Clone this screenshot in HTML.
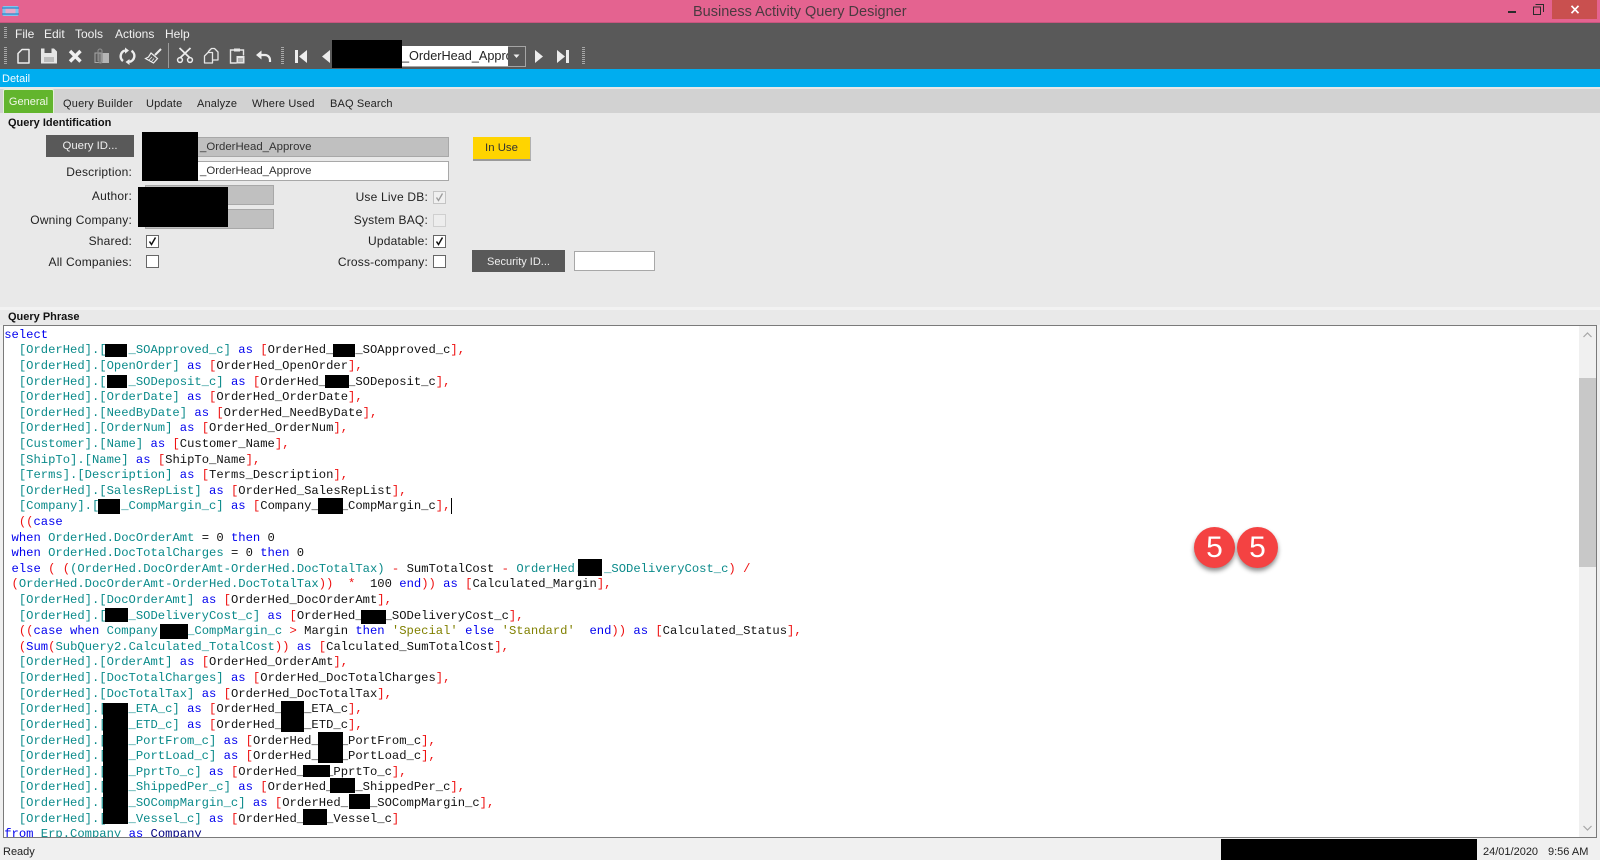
<!DOCTYPE html>
<html><head><meta charset="utf-8"><title>Business Activity Query Designer</title>
<style>
html,body{margin:0;padding:0;width:1600px;height:860px;overflow:hidden;background:#f0f0f0}
body{position:relative;font-family:"Liberation Sans",Arial,sans-serif;font-size:12px;color:#222}
.a{position:absolute}
.txt{position:absolute;white-space:nowrap;line-height:14px}
.lab{position:absolute;white-space:nowrap;line-height:14px;text-align:right;width:130px;letter-spacing:.2px}
.blk{position:absolute;background:#000}
.fld{position:absolute;box-sizing:border-box;border:1px solid #a8a8a8;background:#c0c0c0;font-size:11.4px}
.btn{position:absolute;background:#595959;color:#eee;text-align:center;font-size:11.4px}
.cb{position:absolute;box-sizing:border-box;width:13px;height:13px;background:#fff;border:1px solid #666}
.cb svg{position:absolute;left:0;top:0}
.grip{position:absolute;width:3px;background:repeating-linear-gradient(to bottom,#a8a8a8 0 1px,transparent 1px 2px)}
#ed{position:absolute;left:3px;top:325px;width:1594px;height:513px;box-sizing:border-box;border:1px solid #7a7a7a;background:#fff;overflow:hidden}
#code{position:absolute;left:.2px;top:1.7px;margin:0;font-family:"Liberation Mono",monospace;font-size:12.2px;line-height:15.61px;color:#111;white-space:pre}
.t{color:#0a8a8a}.b{color:#0000ee}.r{color:#ee1111}.n{color:#000080}.o{color:#808000}
.badge{position:absolute;width:41px;height:41px;border-radius:50%;background:#f44242;box-shadow:0 3px 5px rgba(0,0,0,.45);color:#fff;font-size:30px;line-height:41px;text-align:center}
</style></head><body>

<!-- title bar -->
<div class="a" style="left:0;top:0;width:1600px;height:23px;background:#e46390;border-bottom:1px solid #c9557f;box-sizing:border-box"></div>
<svg class="a" style="left:2px;top:5px" width="17" height="12" viewBox="0 0 17 12"><rect x="0.5" y="1" width="16" height="10" rx="1.5" fill="#7fc4ee"/><rect x="3.5" y="3.5" width="10" height="5" fill="#e8a8c8"/><path d="M0 3h17M0 9h17" stroke="#2f86c8" stroke-width="1.2"/></svg>
<div class="txt" style="left:693px;top:4px;font-size:14.5px;line-height:17px;color:#4a3a40">Business Activity Query Designer</div>
<div class="a" style="left:1508px;top:11px;width:8px;height:2px;background:#2b2b2b"></div>
<svg class="a" style="left:1533px;top:4px" width="11" height="11" viewBox="0 0 11 11" fill="none" stroke="#2b2b2b"><rect x="0.5" y="3" width="7" height="7.5"/><path d="M2.5 .5h8v7.5"/></svg>
<div class="a" style="left:1552px;top:0;width:45px;height:19px;background:#c9504f"></div>
<svg class="a" style="left:1570px;top:5px" width="10" height="9" viewBox="0 0 10 9"><path d="M1.5 .8l7 7.4M8.5 .8l-7 7.4" stroke="#fff" stroke-width="1.7" fill="none"/></svg>

<!-- toolbar -->
<div class="a" style="left:0;top:23px;width:1600px;height:46px;background:#595959"></div>
<div class="grip" style="left:4px;top:27px;height:12px"></div>
<div class="txt" style="left:15px;top:27px;color:#f2f2f2">File</div>
<div class="txt" style="left:44px;top:27px;color:#f2f2f2">Edit</div>
<div class="txt" style="left:75px;top:27px;color:#f2f2f2">Tools</div>
<div class="txt" style="left:115px;top:27px;color:#f2f2f2">Actions</div>
<div class="txt" style="left:165px;top:27px;color:#f2f2f2">Help</div>
<div class="grip" style="left:4px;top:47px;height:18px"></div>

<svg class="a" style="left:0;top:40px" width="300" height="29" viewBox="0 40 300 29" fill="none">
<!-- new -->
<path d="M22 49.5h7v13.5h-11v-9.5z" stroke="#ededed" stroke-width="1.5" stroke-linejoin="round"/>
<!-- save -->
<path d="M41 48.500h13l3 3v12h-16z" fill="#e6e6e6"/><rect x="44.500" y="48.500" width="7" height="4.500" fill="#595959"/><rect x="44" y="57" width="10" height="5" fill="#bdbdbd"/>
<!-- X -->
<path d="M70 51l10.500 10.500M80.500 51l-10.500 10.500" stroke="#f0f0f0" stroke-width="3.400"/>
<!-- delete clips -->
<rect x="101" y="53" width="8" height="10" fill="#b5b5b5"/><rect x="95" y="53" width="6" height="9.500" stroke="#a8a8a8"/><path d="M98 61v-10a2 2 0 0 1 4 0v10.500a1.500 1.500 0 0 1-3 0v-8" stroke="#8a8a8a" stroke-width="1.200"/>
<!-- refresh -->
<path d="M123 61a6 6 0 0 1 2-10.500M131.500 50.800a6 6 0 0 1-2 11" stroke="#ededed" stroke-width="2.400"/><path d="M125 47.500l4 3-4 3.200zM129.500 59l-4 3 4 3z" fill="#ededed"/>
<!-- brush -->
<path d="M155 55l6-6" stroke="#ededed" stroke-width="2"/><path d="M151 53l6.500 5.500-4 4.500-8-4.500 3-1.500z" fill="#595959" stroke="#ededed" stroke-width="1.200"/><path d="M149 60l3-3M151.500 61.500l2.500-3" stroke="#ededed" stroke-width=".8"/>
<!-- separator -->
<path d="M168.500 43v25" stroke="#9a9a9a"/>
<!-- cut -->
<path d="M179.500 48l10.500 10M190.500 48l-10.500 10" stroke="#ececec" stroke-width="1.800"/><circle cx="180" cy="60" r="2.400" stroke="#ececec" stroke-width="1.500"/><circle cx="190" cy="60" r="2.400" stroke="#ececec" stroke-width="1.500"/>
<!-- copy -->
<path d="M204.500 56l3.500-3.500h4.500v10.500h-8z" stroke="#e6e6e6" stroke-width="1.300" stroke-linejoin="round"/><path d="M208.500 52v-.500l3-3h3l3.500 3.500v8h-5" stroke="#e6e6e6" stroke-width="1.300" stroke-linejoin="round"/>
<!-- paste -->
<path d="M234 50h-3.500v13h6M240 50h3.500v5.500" stroke="#e6e6e6" stroke-width="1.400"/><rect x="234" y="48.500" width="6" height="3" fill="#e6e6e6"/><path d="M236.500 56h8v7.500h-8z" fill="#e6e6e6"/><path d="M238 59h5M238 61h5" stroke="#595959" stroke-width=".8"/>
<!-- undo -->
<path d="M260 55h5a5 5 0 0 1 5 5v2" stroke="#ededed" stroke-width="2.200"/><path d="M256 55l5.500-4.500v9z" fill="#ededed"/>
</svg>
<div class="grip" style="left:281px;top:47px;height:18px"></div>

<svg class="a" style="left:290px;top:45px" width="300" height="22" viewBox="290 45 300 22">
<rect x="295" y="50" width="3" height="13" fill="#ededed"/><path d="M307 50v13l-8-6.500z" fill="#ededed"/>
<path d="M330 50v13l-8-6.500z" fill="#ededed"/>
<path d="M535 50v13l8-6.500z" fill="#ededed"/>
<path d="M557 50v13l8-6.500z" fill="#ededed"/><rect x="566" y="50" width="3" height="13" fill="#ededed"/>
</svg>
<div class="a" style="left:402px;top:46px;width:124px;height:21px;box-sizing:border-box;border:1px solid #a5a5a5;border-left:0"></div>
<div class="a" style="left:402px;top:46px;width:106px;height:20px;background:#fff;overflow:hidden;white-space:nowrap;line-height:21px;color:#222;font-size:12.7px">_OrderHead_Approve</div>
<svg class="a" style="left:513px;top:54px" width="8" height="5"><path d="M0.500 0.500h6l-3 3.500z" fill="#eee"/></svg>
<div class="blk" style="left:332px;top:40px;width:70px;height:28px"></div>
<div class="grip" style="left:582px;top:47px;height:18px"></div>

<!-- detail bar -->
<div class="a" style="left:0;top:69px;width:1600px;height:18px;background:#00adef"></div>
<div class="txt" style="left:2px;top:71.500px;font-size:11px;color:#f4fbff">Detail</div>

<!-- tabs -->
<div class="a" style="left:0;top:87px;width:1600px;height:2px;background:#e8e8e8"></div>
<div class="a" style="left:0;top:89px;width:1600px;height:24px;background:#d2d2d2"></div>
<div class="a" style="left:3px;top:89px;width:51px;height:25px;box-sizing:border-box;background:#62b52d;border:1px solid #e4f2d8;border-bottom:0;border-radius:2px 2px 0 0;text-align:center;font-size:11px;line-height:24px;color:#f0f8e8">General</div>
<div class="txt" style="left:63px;top:97px;font-size:11px;letter-spacing:.2px">Query Builder</div>
<div class="txt" style="left:146px;top:97px;font-size:11px;letter-spacing:.15px">Update</div>
<div class="txt" style="left:197px;top:97px;font-size:11px;letter-spacing:.15px">Analyze</div>
<div class="txt" style="left:252px;top:97px;font-size:11px;letter-spacing:.15px">Where Used</div>
<div class="txt" style="left:330px;top:97px;font-size:11px;letter-spacing:.15px">BAQ Search</div>

<!-- query identification panel -->
<div class="a" style="left:0;top:113px;width:1600px;height:194px;background:#e9e9e9"></div>
<div class="a" style="left:0;top:307px;width:1600px;height:3px;background:#f2f2f2"></div>
<div class="a" style="left:0;top:310px;width:1600px;height:15px;background:#e9e9e9"></div>
<div class="txt" style="left:8px;top:116px;font-size:11px;font-weight:bold;color:#111">Query Identification</div>
<div class="btn" style="left:46px;top:135px;width:88px;height:22px;line-height:22px;">Query ID...</div>
<div class="fld" style="left:190px;top:137px;width:259px;height:20px;line-height:19px;padding-left:9px;color:#333">_OrderHead_Approve</div>
<div class="fld" style="left:190px;top:161px;width:259px;height:20px;line-height:19px;padding-left:9px;background:#fff;color:#333">_OrderHead_Approve</div>
<div class="blk" style="left:142px;top:132px;width:56px;height:49px"></div>
<div class="a" style="left:473px;top:137px;width:58px;height:24px;box-sizing:border-box;background:#ffd400;border-bottom:2px solid #9a9a9a;border-right:1px solid #b0b0b0;text-align:center;line-height:23px;color:#333;font-size:11.4px">In Use</div>

<div class="lab" style="left:2px;top:165px">Description:</div>
<div class="lab" style="left:2px;top:189px">Author:</div>
<div class="lab" style="left:2px;top:213px">Owning Company:</div>
<div class="lab" style="left:2px;top:234px">Shared:</div>
<div class="lab" style="left:2px;top:255px">All Companies:</div>
<div class="fld" style="left:145px;top:185px;width:129px;height:20px"></div>
<div class="fld" style="left:145px;top:209px;width:129px;height:20px"></div>
<div class="blk" style="left:138px;top:187px;width:90px;height:40px"></div>

<div class="cb" style="left:146px;top:235px"><svg width="11" height="11"><path d="M2.500 5.500l2 3 4-7" fill="none" stroke="#111" stroke-width="1.500"/></svg></div>
<div class="cb" style="left:146px;top:255px"></div>

<div class="lab" style="left:298px;top:190px">Use Live DB:</div>
<div class="lab" style="left:298px;top:213px">System BAQ:</div>
<div class="lab" style="left:298px;top:234px">Updatable:</div>
<div class="lab" style="left:298px;top:255px">Cross-company:</div>
<div class="cb" style="left:433px;top:191px;border-color:#c4c4c4;background:#f0f0f0"><svg width="11" height="11"><path d="M2.500 5.500l2 3 4-7" fill="none" stroke="#9a9a9a" stroke-width="1.300"/></svg></div>
<div class="cb" style="left:433px;top:214px;border-color:#cfcfcf;background:#ededed"></div>
<div class="cb" style="left:433px;top:235px"><svg width="11" height="11"><path d="M2.500 5.500l2 3 4-7" fill="none" stroke="#111" stroke-width="1.500"/></svg></div>
<div class="cb" style="left:433px;top:255px"></div>

<div class="btn" style="left:472px;top:250px;width:93px;height:22px;line-height:24px;font-size:11px">Security ID...</div>
<div class="a" style="left:574px;top:251px;width:81px;height:20px;box-sizing:border-box;background:#fff;border:1px solid #a8a8a8"></div>

<div class="txt" style="left:8px;top:310px;font-size:11px;font-weight:bold;color:#111">Query Phrase</div>

<!-- editor -->
<div id="ed">
<pre id="code"><span class="b">select</span>
  <span class="t">[OrderHed].[   _SOApproved_c]</span> <span class="b">as</span> <span class="r">[</span>OrderHed_   _SOApproved_c<span class="r">],</span>
  <span class="t">[OrderHed].[OpenOrder]</span> <span class="b">as</span> <span class="r">[</span>OrderHed_OpenOrder<span class="r">],</span>
  <span class="t">[OrderHed].[   _SODeposit_c]</span> <span class="b">as</span> <span class="r">[</span>OrderHed_   _SODeposit_c<span class="r">],</span>
  <span class="t">[OrderHed].[OrderDate]</span> <span class="b">as</span> <span class="r">[</span>OrderHed_OrderDate<span class="r">],</span>
  <span class="t">[OrderHed].[NeedByDate]</span> <span class="b">as</span> <span class="r">[</span>OrderHed_NeedByDate<span class="r">],</span>
  <span class="t">[OrderHed].[OrderNum]</span> <span class="b">as</span> <span class="r">[</span>OrderHed_OrderNum<span class="r">],</span>
  <span class="t">[Customer].[Name]</span> <span class="b">as</span> <span class="r">[</span>Customer_Name<span class="r">],</span>
  <span class="t">[ShipTo].[Name]</span> <span class="b">as</span> <span class="r">[</span>ShipTo_Name<span class="r">],</span>
  <span class="t">[Terms].[Description]</span> <span class="b">as</span> <span class="r">[</span>Terms_Description<span class="r">],</span>
  <span class="t">[OrderHed].[SalesRepList]</span> <span class="b">as</span> <span class="r">[</span>OrderHed_SalesRepList<span class="r">],</span>
  <span class="t">[Company].[   _CompMargin_c]</span> <span class="b">as</span> <span class="r">[</span>Company_   _CompMargin_c<span class="r">],</span>
  <span class="r">((</span><span class="b">case</span>
 <span class="b">when</span> <span class="t">OrderHed.DocOrderAmt</span> = 0 <span class="b">then</span> 0
 <span class="b">when</span> <span class="t">OrderHed.DocTotalCharges</span> = 0 <span class="b">then</span> 0
 <span class="b">else</span> <span class="r">(</span> <span class="r">(</span><span class="t">(OrderHed.DocOrderAmt-OrderHed.DocTotalTax)</span> <span class="r">-</span> SumTotalCost <span class="r">-</span> <span class="t">OrderHed.   _SODeliveryCost_c</span><span class="r">)</span> <span class="r">/</span>
 <span class="r">(</span><span class="t">OrderHed.DocOrderAmt-OrderHed.DocTotalTax</span><span class="r">))</span>  <span class="r">*</span>  <span>100</span> <span class="b">end</span><span class="r">))</span> <span class="b">as</span> <span class="r">[</span>Calculated_Margin<span class="r">],</span>
  <span class="t">[OrderHed].[DocOrderAmt]</span> <span class="b">as</span> <span class="r">[</span>OrderHed_DocOrderAmt<span class="r">],</span>
  <span class="t">[OrderHed].[   _SODeliveryCost_c]</span> <span class="b">as</span> <span class="r">[</span>OrderHed_   _SODeliveryCost_c<span class="r">],</span>
  <span class="r">((</span><span class="b">case when</span> <span class="t">Company.   _CompMargin_c</span> <span class="r">&gt;</span> Margin <span class="b">then</span> <span class="o">'Special'</span> <span class="b">else</span> <span class="o">'Standard'</span>  <span class="b">end</span><span class="r">))</span> <span class="b">as</span> <span class="r">[</span>Calculated_Status<span class="r">],</span>
  <span class="r">(</span><span class="b">Sum</span><span class="r">(</span><span class="t">SubQuery2.Calculated_TotalCost</span><span class="r">))</span> <span class="b">as</span> <span class="r">[</span>Calculated_SumTotalCost<span class="r">],</span>
  <span class="t">[OrderHed].[OrderAmt]</span> <span class="b">as</span> <span class="r">[</span>OrderHed_OrderAmt<span class="r">],</span>
  <span class="t">[OrderHed].[DocTotalCharges]</span> <span class="b">as</span> <span class="r">[</span>OrderHed_DocTotalCharges<span class="r">],</span>
  <span class="t">[OrderHed].[DocTotalTax]</span> <span class="b">as</span> <span class="r">[</span>OrderHed_DocTotalTax<span class="r">],</span>
  <span class="t">[OrderHed].[   _ETA_c]</span> <span class="b">as</span> <span class="r">[</span>OrderHed_   _ETA_c<span class="r">],</span>
  <span class="t">[OrderHed].[   _ETD_c]</span> <span class="b">as</span> <span class="r">[</span>OrderHed_   _ETD_c<span class="r">],</span>
  <span class="t">[OrderHed].[   _PortFrom_c]</span> <span class="b">as</span> <span class="r">[</span>OrderHed_   _PortFrom_c<span class="r">],</span>
  <span class="t">[OrderHed].[   _PortLoad_c]</span> <span class="b">as</span> <span class="r">[</span>OrderHed_   _PortLoad_c<span class="r">],</span>
  <span class="t">[OrderHed].[   _PprtTo_c]</span> <span class="b">as</span> <span class="r">[</span>OrderHed_   _PprtTo_c<span class="r">],</span>
  <span class="t">[OrderHed].[   _ShippedPer_c]</span> <span class="b">as</span> <span class="r">[</span>OrderHed_   _ShippedPer_c<span class="r">],</span>
  <span class="t">[OrderHed].[   _SOCompMargin_c]</span> <span class="b">as</span> <span class="r">[</span>OrderHed_   _SOCompMargin_c<span class="r">],</span>
  <span class="t">[OrderHed].[   _Vessel_c]</span> <span class="b">as</span> <span class="r">[</span>OrderHed_   _Vessel_c<span class="r">]</span>
<span class="b">from</span> <span class="t">Erp.Company</span> <span class="b">as</span> <span class="n">Company</span></pre>
<!-- scrollbar -->
<div class="a" style="left:1575px;top:0;width:17px;height:511px;background:#f0f0f0"></div>
<div class="a" style="left:1575px;top:52px;width:17px;height:189px;background:#c8c8c8"></div>
<svg class="a" style="left:1579px;top:6px" width="9" height="6"><path d="M.5 5l4-4 4 4" fill="none" stroke="#a6a6a6" stroke-width="1.200"/></svg>
<svg class="a" style="left:1579px;top:499px" width="9" height="6"><path d="M.5 1l4 4 4-4" fill="none" stroke="#a6a6a6" stroke-width="1.200"/></svg>
</div>
<!-- caret -->
<div class="a" style="left:451px;top:498px;width:1px;height:16px;background:#000"></div>

<!-- code redactions -->
<div class="blk" style="left:105px;top:344px;width:22px;height:13px"></div>
<div class="blk" style="left:333px;top:344px;width:22px;height:13px"></div>
<div class="blk" style="left:107px;top:375px;width:20px;height:13px"></div>
<div class="blk" style="left:325px;top:375px;width:24px;height:13px"></div>
<div class="blk" style="left:98px;top:499px;width:22px;height:15px"></div>
<div class="blk" style="left:318px;top:498px;width:25px;height:16px"></div>
<div class="blk" style="left:578px;top:559px;width:24px;height:17px"></div>
<div class="blk" style="left:105px;top:608px;width:23px;height:14px"></div>
<div class="blk" style="left:361px;top:610px;width:25px;height:14px"></div>
<div class="blk" style="left:160px;top:624px;width:28px;height:15px"></div>
<div class="blk" style="left:103px;top:703px;width:25px;height:121px"></div>
<div class="blk" style="left:281px;top:701px;width:23px;height:31px"></div>
<div class="blk" style="left:318px;top:732px;width:25px;height:31px"></div>
<div class="blk" style="left:303px;top:765px;width:27px;height:12px"></div>
<div class="blk" style="left:330px;top:778px;width:25px;height:15px"></div>
<div class="blk" style="left:349px;top:794px;width:21px;height:15px"></div>
<div class="blk" style="left:303px;top:809px;width:24px;height:16px"></div>

<!-- badges -->
<div class="badge" style="left:1194px;top:527px">5</div>
<div class="badge" style="left:1237px;top:527px">5</div>

<!-- status bar -->
<div class="txt" style="left:3px;top:845px;font-size:11px">Ready</div>
<div class="blk" style="left:1221px;top:839px;width:256px;height:21px"></div>
<div class="txt" style="left:1483px;top:845px;font-size:11px">24/01/2020</div>
<div class="txt" style="left:1548px;top:845px;font-size:11px">9:56 AM</div>
</body></html>
